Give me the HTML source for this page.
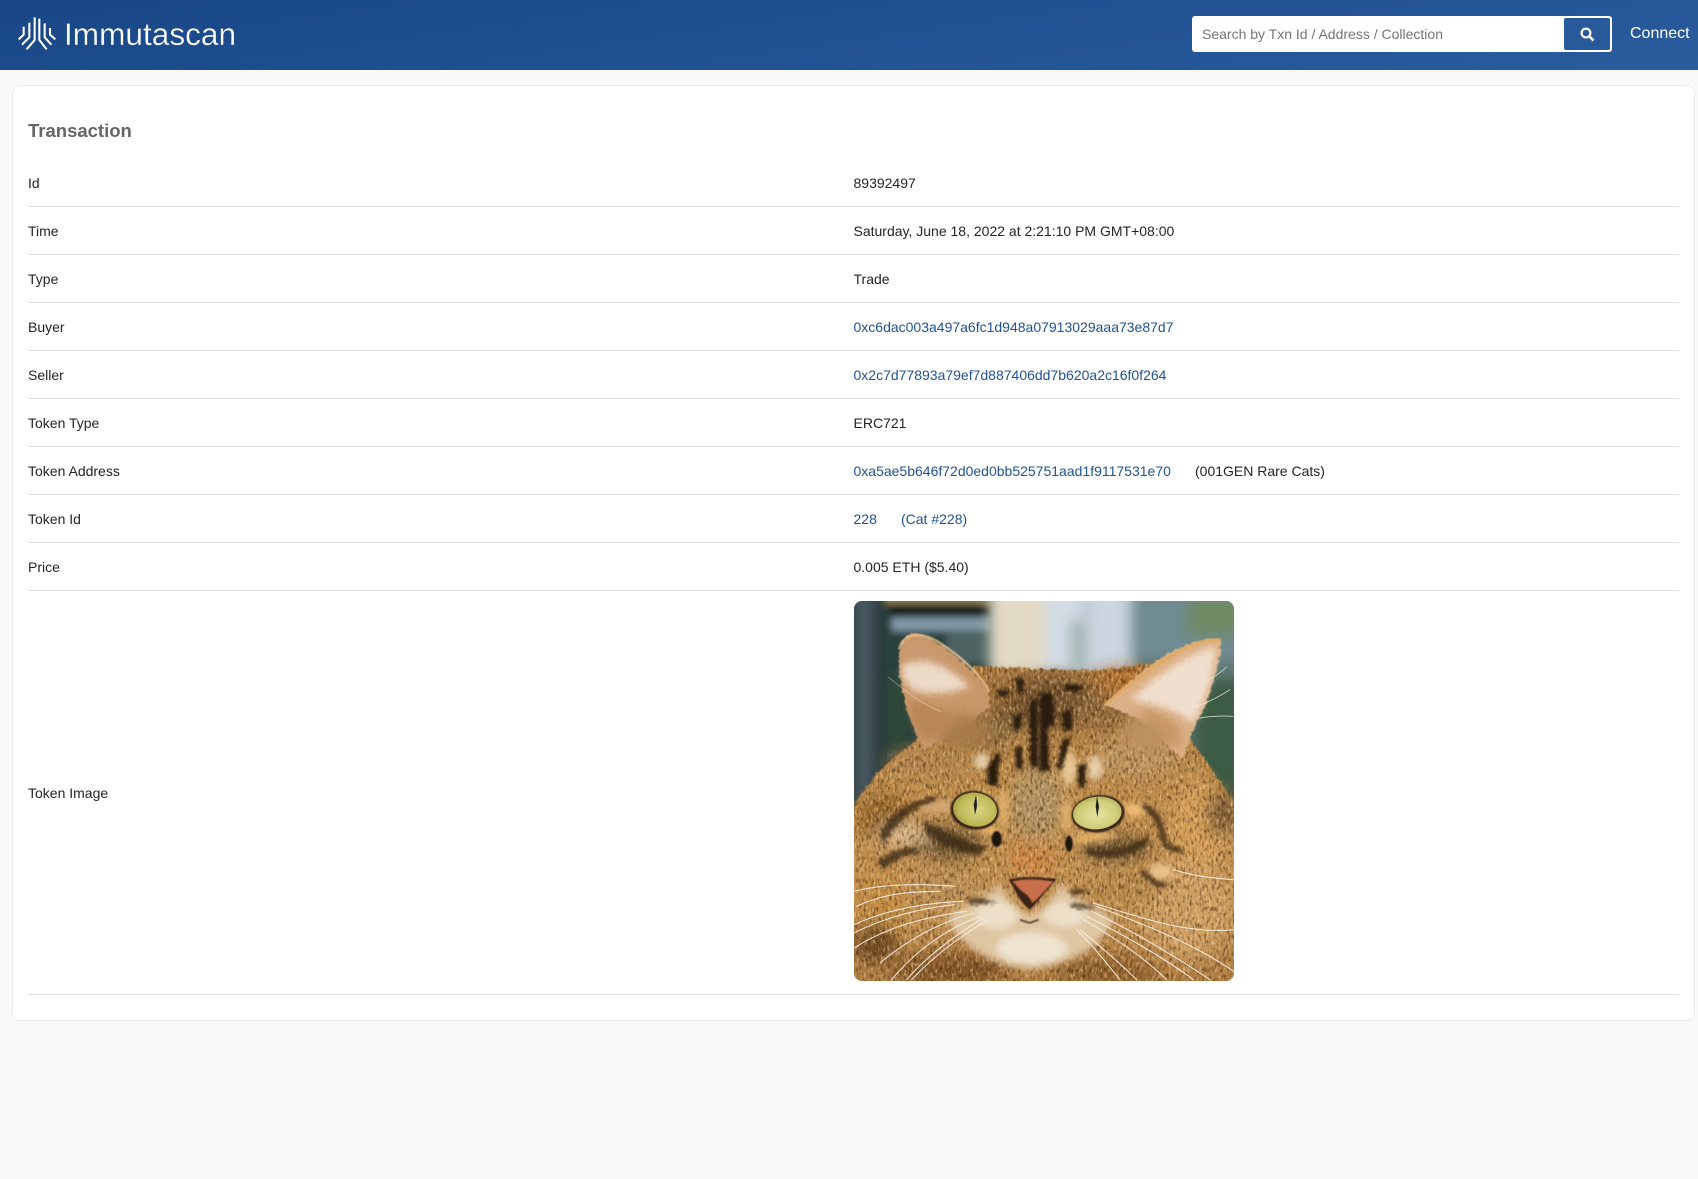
<!DOCTYPE html>
<html lang="en"><head><meta charset="utf-8"><title>Immutascan</title>
<style>
*{box-sizing:border-box}
html,body{margin:0;padding:0}
body{width:1698px;height:1179px;background:#f9f9f9;font-family:"Liberation Sans",Arial,sans-serif;font-size:14px;color:#212529;position:relative;overflow:hidden}
.hdr{position:absolute;left:0;top:0;width:1698px;height:70px;background:linear-gradient(172deg,#184685 0%,#2a5c9e 100%)}
.brand{position:absolute;left:64px;top:15px;font-size:31.6px;line-height:38px;color:#fff;-webkit-text-stroke:.3px #1f4f8f}
.search{position:absolute;left:1192px;top:16px;width:420px;height:36px;background:#fff;border-radius:3px}
.ph{position:absolute;left:10px;top:9px;font-size:14px;line-height:18px;color:#757575;white-space:nowrap}
.btn{position:absolute;left:1564px;top:18px;width:46px;height:32px;background:#285a9b;border-radius:2px}
.conn{position:absolute;left:1630px;top:24px;font-size:16px;line-height:20px;color:#fff}
.card{position:absolute;left:12px;top:85px;width:1683px;height:936px;background:#fff;border:1px solid #e9e9f1;border-radius:8px}
h1{position:absolute;left:28px;top:120px;margin:0;font-size:18.5px;line-height:22px;font-weight:700;color:#666}
.l,.v{position:absolute;line-height:20px;white-space:nowrap}
.l{left:28px}.v{left:853.5px}
.ln{position:absolute;left:28px;width:1651px;height:1px;background:#dedede}
a{color:#1f5299;text-decoration:none}
.cat{position:absolute;left:854px;top:601px;width:380px;height:380px;border-radius:8px;display:block}
</style></head><body>
<div class="hdr"></div>
<svg style="position:absolute;left:14px;top:12px" width="50" height="44" viewBox="0 0 150 132" fill="none" stroke="#fff" stroke-width="6.2">
<path d="M29 44V68L14 82"/><path d="M46 32V76L24 98"/><path d="M62 16V84L38 112"/>
<path d="M76 20V84L98 112"/><path d="M92 34V76L112 98"/><path d="M108 48V68L124 82"/>
</svg>
<div class="brand">Immutascan</div>
<div class="search"><div class="ph">Search by Txn Id / Address / Collection</div></div>
<div class="btn"><svg width="46" height="32" viewBox="0 0 46 32" fill="none" stroke="#fff"><circle cx="22" cy="15" r="4.4" stroke-width="2.2"/><path d="M25.5 18.5L29.5 22.5" stroke-width="2.6"/></svg></div>
<div class="conn">Connect</div>
<div class="card"></div>
<h1>Transaction</h1>

<div class="l" style="top:173px">Id</div><div class="v" style="top:173px">89392497</div><div class="ln" style="top:206px"></div>
<div class="l" style="top:221px">Time</div><div class="v" style="top:221px">Saturday, June 18, 2022 at 2:21:10 PM GMT+08:00</div><div class="ln" style="top:254px"></div>
<div class="l" style="top:269px">Type</div><div class="v" style="top:269px">Trade</div><div class="ln" style="top:302px"></div>
<div class="l" style="top:317px">Buyer</div><div class="v" style="top:317px"><a href="#">0xc6dac003a497a6fc1d948a07913029aaa73e87d7</a></div><div class="ln" style="top:350px"></div>
<div class="l" style="top:365px">Seller</div><div class="v" style="top:365px"><a href="#">0x2c7d77893a79ef7d887406dd7b620a2c16f0f264</a></div><div class="ln" style="top:398px"></div>
<div class="l" style="top:413px">Token Type</div><div class="v" style="top:413px">ERC721</div><div class="ln" style="top:446px"></div>
<div class="l" style="top:461px">Token Address</div><div class="v" style="top:461px"><a href="#">0xa5ae5b646f72d0ed0bb525751aad1f9117531e70</a></div><div class="v" style="top:461px;left:1195px">(001GEN Rare Cats)</div><div class="ln" style="top:494px"></div>
<div class="l" style="top:509px">Token Id</div><div class="v" style="top:509px"><a href="#">228</a></div><div class="v" style="top:509px;left:901px"><a href="#">(Cat #228)</a></div><div class="ln" style="top:542px"></div>
<div class="l" style="top:557px">Price</div><div class="v" style="top:557px">0.005 ETH ($5.40)</div><div class="ln" style="top:590px"></div>
<div class="l" style="top:783px">Token Image</div><div class="ln" style="top:994px"></div>

<svg class="cat" viewBox="42 34 1140 1140" xmlns="http://www.w3.org/2000/svg">
<defs>
<filter id="b2" x="-30%" y="-30%" width="160%" height="160%"><feGaussianBlur stdDeviation="2"/></filter>
<filter id="b5" x="-30%" y="-30%" width="160%" height="160%"><feGaussianBlur stdDeviation="5"/></filter>
<filter id="b10" x="-30%" y="-30%" width="160%" height="160%"><feGaussianBlur stdDeviation="10"/></filter>
<filter id="b20" x="-40%" y="-40%" width="180%" height="180%"><feGaussianBlur stdDeviation="20"/></filter>
<filter id="b24" filterUnits="userSpaceOnUse" x="-100" y="-100" width="1500" height="1500"><feGaussianBlur stdDeviation="24"/></filter>
<filter id="furry" filterUnits="userSpaceOnUse" x="0" y="0" width="1240" height="1240" color-interpolation-filters="sRGB">
<feTurbulence type="fractalNoise" baseFrequency="0.07" numOctaves="3" seed="3" result="n1"/>
<feDisplacementMap in="SourceGraphic" in2="n1" scale="18" xChannelSelector="R" yChannelSelector="G" result="d"/>
<feGaussianBlur in="d" stdDeviation="1.5" result="d1"/>
<feTurbulence type="fractalNoise" baseFrequency="0.14 0.06" numOctaves="3" seed="11" result="n2"/>
<feColorMatrix in="n2" type="matrix" values="0 0 0 0 .22  0 0 0 0 .12  0 0 0 0 .04  1.7 0 0 0 -.82" result="dk"/>
<feComposite in="dk" in2="d1" operator="in" result="dk2"/>
<feColorMatrix in="n2" type="matrix" values="0 0 0 0 .97  0 0 0 0 .83  0 0 0 0 .62  0 1.7 0 0 -.85" result="lt"/>
<feComposite in="lt" in2="d1" operator="in" result="lt2"/>
<feMerge><feMergeNode in="d1"/><feMergeNode in="dk2"/><feMergeNode in="lt2"/></feMerge>
</filter>
<filter id="soft" filterUnits="userSpaceOnUse" x="0" y="0" width="1240" height="1240" color-interpolation-filters="sRGB">
<feTurbulence type="fractalNoise" baseFrequency="0.09" numOctaves="2" seed="5" result="n"/>
<feDisplacementMap in="SourceGraphic" in2="n" scale="14" xChannelSelector="R" yChannelSelector="G" result="d"/>
<feGaussianBlur in="d" stdDeviation="1.2"/>
</filter>
<radialGradient id="eL" cx=".55" cy=".5" r=".6"><stop offset="0" stop-color="#d9d387"/><stop offset=".7" stop-color="#bfba56"/><stop offset="1" stop-color="#97933c"/></radialGradient>
<radialGradient id="eR" cx=".5" cy=".55" r=".6"><stop offset="0" stop-color="#e6e2a2"/><stop offset=".7" stop-color="#cfcc78"/><stop offset="1" stop-color="#a9a64c"/></radialGradient>
<linearGradient id="bodyG" x1="0" y1="0" x2="0" y2="1"><stop offset="0" stop-color="#a9793f"/><stop offset=".4" stop-color="#c08d4b"/><stop offset=".75" stop-color="#c49252"/><stop offset="1" stop-color="#ad7a3e"/></linearGradient>
<linearGradient id="pillar" x1="0" y1="0" x2="1" y2="0"><stop offset="0" stop-color="#24323a"/><stop offset=".45" stop-color="#4a5b62"/><stop offset="1" stop-color="#1f2e30"/></linearGradient>
</defs>
<!-- background -->
<rect x="42" y="34" width="1140" height="1140" fill="#5f7a76"/>
<g filter="url(#b10)">
<rect x="10" y="0" width="135" height="800" fill="url(#pillar)"/>
<rect x="130" y="0" width="325" height="700" fill="#2b3f3d"/>
<rect x="135" y="10" width="320" height="34" fill="#8d7f4e"/>
<rect x="148" y="48" width="305" height="26" fill="#0a0e0d"/>
<rect x="155" y="84" width="295" height="40" fill="#7f98a4"/>
<rect x="320" y="130" width="130" height="90" fill="#4e6462"/>
</g>
<g filter="url(#b20)">
<rect x="450" y="-20" width="180" height="290" fill="#e3dac6"/>
<rect x="615" y="-20" width="120" height="280" fill="#d2dbe4"/>
<rect x="690" y="90" width="70" height="150" fill="#a4b5b3"/>
<rect x="740" y="-20" width="140" height="280" fill="#ccd6e0"/>
<rect x="870" y="-20" width="340" height="230" fill="#6f8b92"/>
<rect x="1040" y="20" width="180" height="120" fill="#6f8a66"/>
<rect x="1060" y="270" width="160" height="400" fill="#3e5c44"/>
<rect x="150" y="260" width="50" height="220" fill="#2f4a38"/>
</g>
<!-- head base with fur noise -->
<g filter="url(#furry)">
<path d="M20 680C60 620 100 560 165 495C240 470 330 320 402 229C480 235 720 245 812 239L942 219L1052 454C1090 500 1130 560 1200 665V1200H20Z" fill="url(#bodyG)"/>
<g filter="url(#b24)">
<ellipse cx="625" cy="340" rx="170" ry="80" fill="#74522d"/>
<ellipse cx="470" cy="300" rx="60" ry="40" fill="#9a6b35"/>
<ellipse cx="850" cy="265" rx="85" ry="26" fill="#b56a28"/>
<ellipse cx="780" cy="370" rx="80" ry="50" fill="#90693a"/>
<ellipse cx="450" cy="420" rx="80" ry="50" fill="#8c6a3c"/>
<ellipse cx="590" cy="640" rx="80" ry="110" fill="#b39464"/>
<ellipse cx="270" cy="520" rx="130" ry="40" fill="#b58650"/>
<ellipse cx="890" cy="500" rx="130" ry="60" fill="#c09660"/>
<ellipse cx="130" cy="680" rx="80" ry="70" fill="#96672c"/>
<ellipse cx="1075" cy="720" rx="80" ry="150" fill="#d69f58"/>
<ellipse cx="1145" cy="670" rx="45" ry="70" fill="#7f5e34"/>
<ellipse cx="1040" cy="960" rx="130" ry="150" fill="#d0a062"/>
<ellipse cx="110" cy="960" rx="90" ry="120" fill="#c68e44"/>
<ellipse cx="105" cy="1060" rx="70" ry="60" fill="#6f4a22"/>
<ellipse cx="330" cy="1140" rx="180" ry="50" fill="#825426"/>
<ellipse cx="800" cy="1145" rx="160" ry="40" fill="#8d5f2c"/>
<ellipse cx="325" cy="760" rx="105" ry="50" fill="#6d5431"/>
<ellipse cx="830" cy="775" rx="100" ry="40" fill="#6e5632"/>
<ellipse cx="190" cy="735" rx="75" ry="32" fill="#dcbd92"/>
<ellipse cx="575" cy="810" rx="70" ry="55" fill="#cf8845"/>
<ellipse cx="330" cy="900" rx="120" ry="40" fill="#bc9056"/>
<ellipse cx="850" cy="900" rx="120" ry="40" fill="#b68849"/>
</g>
</g>
<!-- ears, muzzle, accents, stripes on top with gentle fraying -->
<g filter="url(#soft)">
<path d="M177 184C180 150 205 125 240 132C320 170 405 240 447 310L452 350L350 430L252 478C222 430 190 340 178 260Z" fill="#c9986a"/>
<path d="M1142 149C1090 140 1010 170 942 220C880 262 830 310 792 344L900 390L1027 508L1060 420C1090 370 1125 280 1142 190Z" fill="#dcb086"/>
<g filter="url(#b20)">
<ellipse cx="370" cy="425" rx="85" ry="50" fill="#a87c48"/>
<ellipse cx="930" cy="430" rx="85" ry="50" fill="#bd9260"/>
</g>
<g filter="url(#b10)">
<path d="M185 230C230 195 320 220 390 290C350 310 270 320 215 300C195 280 185 255 185 230Z" fill="#ecd9c6"/>
<path d="M192 165C230 150 290 185 330 225C280 215 230 195 192 190Z" fill="#cb9a72"/>
<path d="M205 340C250 330 320 360 360 395C310 430 270 450 245 455C225 410 210 375 205 340Z" fill="#b98755"/>
<path d="M1125 170C1060 185 960 250 870 330C950 340 1020 370 1060 400C1090 340 1125 260 1125 170Z" fill="#f0dfce"/>
<path d="M900 350C960 370 1010 410 1030 480L960 430Z" fill="#c99766"/>
<path d="M480 880C440 930 370 940 320 985C350 1050 430 1125 570 1140C710 1125 790 1060 820 990C780 950 700 930 660 880C640 930 610 960 570 975C530 960 500 930 480 880Z" fill="#dfc6a2"/>
<ellipse cx="470" cy="975" rx="65" ry="42" fill="#eddfc8"/>
<ellipse cx="675" cy="975" rx="65" ry="38" fill="#eddfc8"/>
<ellipse cx="575" cy="1075" rx="105" ry="46" fill="#efe4d0"/>
<ellipse cx="687" cy="535" rx="24" ry="52" fill="#e8c794"/>
<ellipse cx="425" cy="515" rx="24" ry="26" fill="#e4cda8"/>
<ellipse cx="765" cy="535" rx="24" ry="36" fill="#e6cfaa"/>
<ellipse cx="440" cy="718" rx="50" ry="14" fill="#efb870" transform="rotate(22 440 718)"/>
<ellipse cx="760" cy="742" rx="70" ry="13" fill="#efb870" transform="rotate(-5 760 742)"/>
<ellipse cx="490" cy="655" rx="16" ry="58" fill="#dfae6c"/>
<ellipse cx="680" cy="675" rx="16" ry="50" fill="#dfae6c"/>
<ellipse cx="885" cy="660" rx="38" ry="20" fill="#efbb75"/>
<ellipse cx="962" cy="845" rx="36" ry="22" fill="#ebc590"/>
<ellipse cx="290" cy="650" rx="60" ry="20" fill="#d3a872"/>
</g>
<g fill="#2a1a0c" filter="url(#b5)">
<path d="M445 585C435 550 445 510 475 488L484 505C470 530 472 560 475 588Z"/>
<path d="M525 475L545 468L548 538L530 542Z"/>
<path d="M568 340L592 320L594 530L570 535Z"/>
<path d="M600 310L638 310L644 400L622 420L630 540L598 552Z"/>
<path d="M665 370L694 355L696 422L672 426Z"/>
<path d="M668 450L692 445L664 542L650 535Z"/>
<path d="M712 530L737 520L734 592L715 592Z"/>
<ellipse cx="490" cy="310" rx="20" ry="10"/>
<ellipse cx="700" cy="295" rx="30" ry="11"/>
<path d="M525 265L548 262L552 308L535 312Z"/>
<path d="M520 380L545 370L540 420L520 425Z"/>
</g>
<g fill="#3c2a14" filter="url(#b5)" opacity=".8">
<path d="M112 815C150 785 190 770 240 772L228 792C190 798 160 812 130 842Z"/>
<path d="M120 735C140 680 200 632 295 618L285 636C220 650 170 695 130 768Z"/>
<path d="M250 690C310 720 380 760 440 770L420 795C360 795 290 765 255 725Z"/>
<path d="M740 772C810 792 880 772 932 728L916 772C870 802 790 816 735 792Z"/>
<path d="M905 645C945 640 970 680 982 760C1000 770 1030 775 1036 790C1000 792 975 782 965 762C955 710 935 670 905 656Z"/>
<path d="M905 838C930 860 960 880 990 885L960 896C930 880 910 865 900 850Z"/>
<path d="M690 905C700 895 730 895 745 905L700 920Z"/>
<path d="M685 945C715 935 750 945 770 960L700 955Z"/>
<path d="M380 930C410 920 450 930 470 940L395 945Z"/>
</g>
</g>
<ellipse cx="470" cy="748" rx="15" ry="24" fill="#1f140a" filter="url(#b2)"/>
<ellipse cx="687" cy="762" rx="11" ry="24" fill="#1f140a" filter="url(#b2)"/>
<!-- ear rims -->
<path d="M178 178C190 130 240 122 300 160C360 200 420 250 447 305" fill="none" stroke="#e8c190" stroke-width="6" filter="url(#b2)"/>
<path d="M1142 152C1070 140 960 210 795 345" fill="none" stroke="#e3a95e" stroke-width="8" filter="url(#b2)"/>
<!-- eyes -->
<ellipse cx="404" cy="662" rx="73" ry="58" fill="#3a2712" transform="rotate(8 404 662)" filter="url(#b2)"/>
<ellipse cx="405" cy="660" rx="66" ry="51" fill="url(#eL)" transform="rotate(8 405 660)"/>
<path d="M408 616L413 645L405 675L401 645Z" fill="#20221a"/>
<path d="M412 620V660" stroke="#e9ecd8" stroke-width="3" opacity=".7"/>
<ellipse cx="774" cy="672" rx="80" ry="56" fill="#3a2712" transform="rotate(-6 774 672)" filter="url(#b2)"/>
<ellipse cx="772" cy="670" rx="73" ry="49" fill="url(#eR)" transform="rotate(-6 772 670)"/>
<path d="M771 620L777 650L772 683L767 650Z" fill="#20221a"/>
<!-- nose -->
<path d="M505 870C540 858 610 862 650 868C630 890 600 930 570 960C540 940 530 905 505 870Z" fill="#3a2314" filter="url(#b2)"/>
<path d="M516 876C550 866 600 868 640 876C622 895 597 925 577 940C570 925 560 912 545 905C535 895 528 885 516 876Z" fill="#c8704a" filter="url(#b2)"/>
<path d="M540 990L568 1000L596 990" fill="none" stroke="#4b3522" stroke-width="5" filter="url(#b2)"/>
<!-- whiskers -->
<g fill="none" stroke="#f6efe4" stroke-width="3.2" stroke-linecap="round" opacity=".92">
<path d="M42 905C120 885 220 880 345 890"/>
<path d="M50 950C120 915 200 905 300 905"/>
<path d="M42 1005C130 965 240 940 370 935"/>
<path d="M42 1030C130 985 240 955 345 945"/>
<path d="M42 1075C130 1020 230 985 380 965"/>
<path d="M120 1120C190 1060 290 1000 400 970"/>
<path d="M155 1170C220 1090 320 1015 420 980"/>
<path d="M200 1170C260 1100 340 1040 430 985"/>
<path d="M215 1170C280 1100 360 1040 445 990"/>
<path d="M760 940C880 975 1030 1035 1180 1020"/>
<path d="M770 950C900 1000 1060 1060 1180 1145"/>
<path d="M755 965C870 1020 990 1090 1110 1170"/>
<path d="M740 980C860 1040 980 1110 1060 1170"/>
<path d="M730 990C820 1040 920 1110 980 1170"/>
<path d="M720 1020C780 1070 840 1120 890 1170"/>
<path d="M710 1020C760 1070 800 1120 840 1170"/>
<path d="M1000 840C1060 860 1120 865 1180 870"/>
<path d="M1080 385C1110 380 1150 378 1180 380" stroke-width="2"/>
<path d="M1070 350C1110 335 1140 320 1170 300" stroke-width="2"/>
<path d="M1090 280C1120 265 1140 250 1160 232" stroke-width="2"/>
<path d="M145 262C190 300 240 340 300 365" stroke-width="2" opacity=".6"/>
</g>
</svg>
</body></html>
